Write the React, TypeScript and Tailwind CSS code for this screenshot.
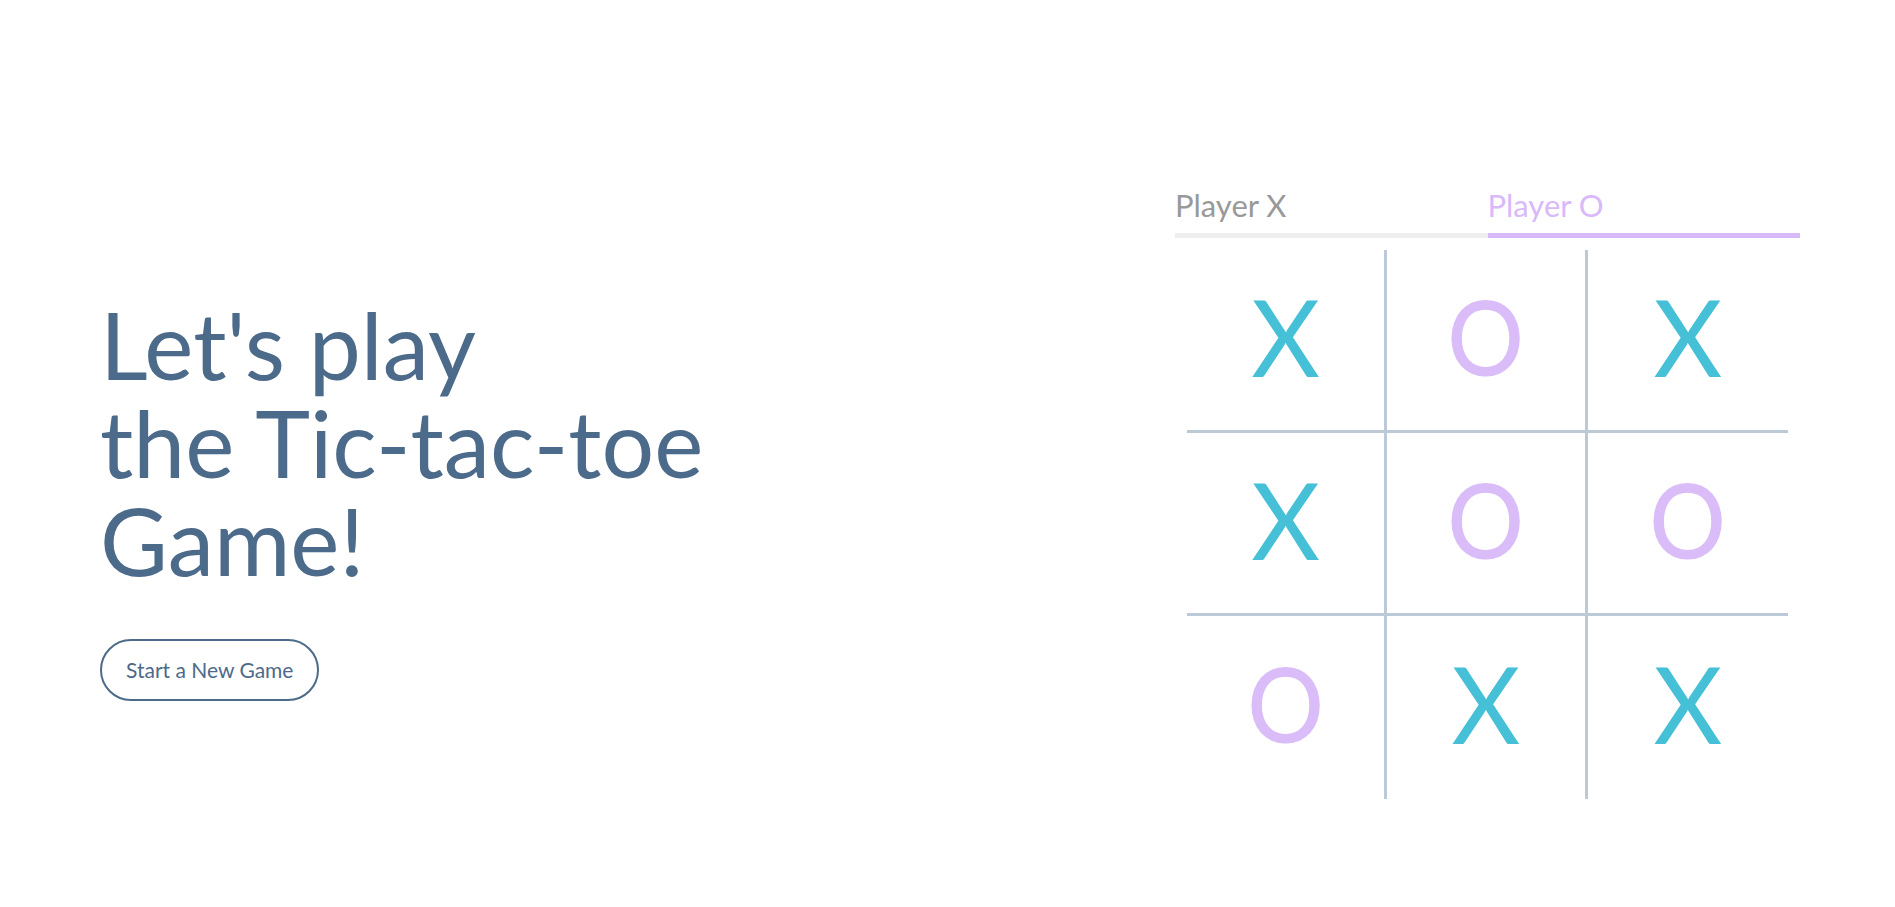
const board: ("X" | "O")[] = ["X", "O", "X", "X", "O", "O", "O", "X", "X"];

function Cell({ value, index }: { value: "X" | "O"; index: number }) {
  const col = index % 3;
  const row = Math.floor(index / 3);
  return (
    <div
      className={
        "flex items-center justify-center border-[#bccad8] " +
        (col < 2 ? "border-r-[3px] " : "") +
        (row < 2 ? "border-b-[3px] " : "")
      }
    >
      {value === "X" ? (
        <span className="pb-2 text-[106px] leading-none text-[#45c0d6]">X</span>
      ) : (
        <span className="scale-x-[0.92] pb-2 text-[104px] font-medium leading-none text-[#d9bcf8]">O</span>
      )}
    </div>
  );
}

export default function App() {
  return (
    <div
      className="flex min-h-screen items-center justify-between bg-white pl-[100px] pr-[95px] pt-[74px]"
      style={{ fontFamily: "Lato, 'Open Sans', sans-serif" }}
    >
      {/* Intro */}
      <div className="flex flex-col items-start pt-[14px]">
        <h1 className="text-[93px] font-normal leading-[98px] text-[#4c6a8a]">
          Let's play
          <br />
          the Tic-tac-toe
          <br />
          Game!
        </h1>
        <button className="mt-[50px] h-[62px] rounded-full border-2 border-[#4c6a8a] px-[24px] text-[21px] text-[#4c6a8a]">
          Start a New Game
        </button>
      </div>

      {/* Game */}
      <div className="flex w-[625px] flex-col">
        <div className="flex">
          <div className="w-1/2 border-b-[5px] border-[#eeeeee] pb-1 text-[31px] text-[#999999]">Player X</div>
          <div className="w-1/2 border-b-[5px] border-[#d8b9f9] pb-1 text-[31px] text-[#d8b9f9]">Player O</div>
        </div>
        <div className="mx-3 mt-3 grid h-[549px] grid-cols-3 grid-rows-3">
          {board.map((v, i) => (
            <Cell key={i} value={v} index={i} />
          ))}
        </div>
      </div>
    </div>
  );
}
